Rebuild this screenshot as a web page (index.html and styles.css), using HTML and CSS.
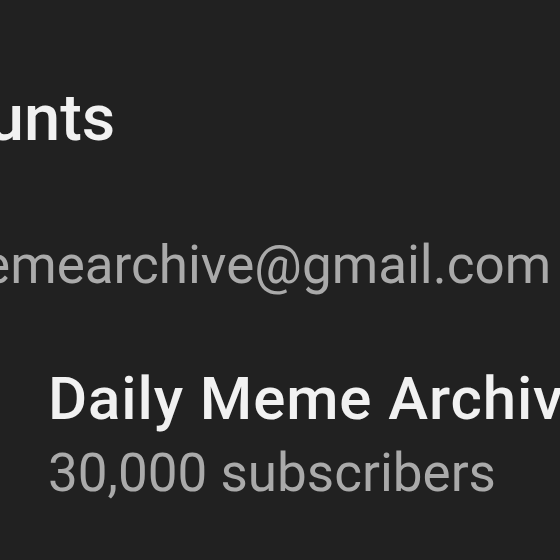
FILE: index.html
```html
<!DOCTYPE html>
<html lang="en">
<head>
    <meta charset="UTF-8">
    <meta name="viewport" content="width=device-width, initial-scale=1.0">
    <title>Accounts</title>
    <link rel="stylesheet" href="styles.css">
</head>
<body>
    <div class="screen">
        <h1 class="title">Accounts</h1>
        <div class="email">dailymemearchive@gmail.com</div>
        <div class="channel">
            <div class="avatar"></div>
            <div class="channel-info">
                <div class="channel-name">Daily Meme Archive</div>
                <div class="channel-subs">30,000 subscribers</div>
            </div>
        </div>
    </div>
</body>
</html>
```

FILE: styles.css
```css
body {
    margin: 0;
    height: 100vh;
    overflow: hidden;
    background-color: #212121;
    font-family: Roboto, "Noto Sans", sans-serif;
}
.screen {
    margin-left: -160px;
    padding-top: 78px;
    white-space: nowrap;
}
.title {
    margin: 0;
    font-size: 65px;
    font-weight: 500;
    line-height: 80px;
    color: #f1f1f1;
}
.email {
    margin-top: 75px;
    margin-left: -14px;
    font-size: 53px;
    line-height: 64px;
    color: #aaaaaa;
}
.channel {
    display: flex;
    align-items: center;
    gap: 64px;
    margin-top: 66px;
}
.avatar {
    width: 144px;
    height: 144px;
    border-radius: 50%;
    background-color: #3a3a3a;
    flex-shrink: 0;
}
.channel-name {
    font-size: 60px;
    font-weight: 500;
    letter-spacing: 0.9px;
    line-height: 72px;
    color: #f1f1f1;
}
.channel-subs {
    font-size: 53px;
    line-height: 76px;
    color: #aaaaaa;
}
```
